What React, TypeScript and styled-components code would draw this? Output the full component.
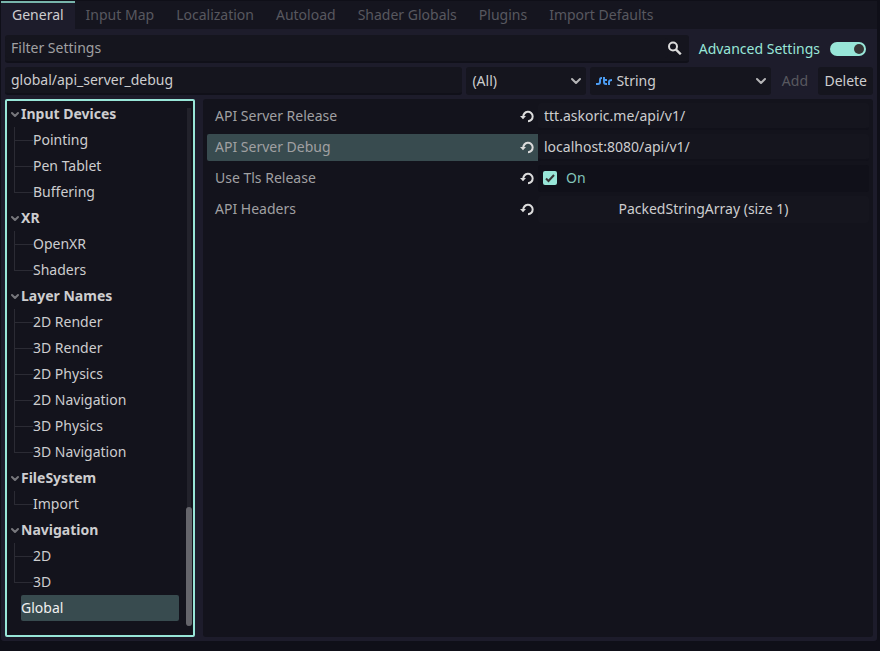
import React, { useState } from "react";
import styled, { createGlobalStyle } from "styled-components";

const c = {
  window: "#0f0f18",
  panel: "#1d1c2b",
  tabs: "#15151f",
  field: "#15151e",
  content: "#13131c",
  accent: "#98e6d8",
  selected: "#384b4f",
  text: "#cdcdcf",
  muted: "#a0a0a2",
  faint: "#58585f",
};

const Global = createGlobalStyle`
  * { box-sizing: border-box; }
  body { margin: 0; background: ${c.window}; }
  body, button, input, select {
    font: 14px/20px "Noto Sans", sans-serif;
    color: ${c.text};
  }
  button, input, select { margin: 0; border: 0; outline: 0; }
`;

const Window = styled.div`
  height: 100vh;
  padding: 1px 3px 10px 1px;
  display: flex;
  flex-direction: column;
`;

const TabBar = styled.div`
  display: flex;
  flex: none;
  height: 28px;
  background: ${c.tabs};
`;

const Tab = styled.button<{ $active: boolean }>`
  flex: none;
  padding: 0 11px 3px;
  white-space: nowrap;
  border-top: 2px solid ${(p) => (p.$active ? "#78b5ac" : "transparent")};
  background: ${(p) => (p.$active ? c.panel : "transparent")};
  color: ${(p) => (p.$active ? c.text : c.faint)};
`;

const Page = styled.main`
  flex: 1;
  min-height: 0;
  display: flex;
  flex-direction: column;
  gap: 4px;
  padding: 6px 4px 4px;
  background: ${c.panel};
  border-radius: 0 0 3px 3px;
`;

const Bar = styled.div`
  display: flex;
  flex: none;
  height: 28px;
  gap: 4px;
`;

const FilterField = styled.label`
  flex: 1;
  display: flex;
  align-items: center;
  padding-right: 7px;
  background: ${c.field};
  border-bottom: 2px solid #101019;
  border-radius: 3px;
`;

const TextInput = styled.input`
  flex: 1;
  min-width: 0;
  padding: 0 6px;
  background: ${c.field};
  border-radius: 3px;
  &::placeholder { color: ${c.muted}; opacity: 1; }
`;

const NameInput = styled(TextInput)`
  border-bottom: 2px solid #101019;
`;

const Toggle = styled.label`
  display: flex;
  align-items: center;
  gap: 10px;
  padding: 0 7px 0 6px;
  color: ${c.accent};
`;

const Switch = styled.input`
  appearance: none;
  display: flex;
  align-items: center;
  width: 36px;
  height: 14px;
  padding: 0 2px;
  border-radius: 7px;
  background: #55565f;
  &::before {
    content: "";
    width: 10px;
    height: 10px;
    border-radius: 50%;
    background: #363636;
  }
  &:checked { background: ${c.accent}; justify-content: flex-end; }
`;

const SelectBox = styled.div<{ $width: number; $icon?: boolean }>`
  display: grid;
  align-items: center;
  flex: 0 0 ${(p) => p.$width}px;
  background: ${c.field};
  border-radius: 3px;
  > * { grid-area: 1 / 1; }
  > svg { pointer-events: none; }
  > select { padding-left: ${(p) => (p.$icon ? 26 : 6)}px; }
`;

const Select = styled.select`
  appearance: none;
  width: 100%;
  height: 28px;
  background: transparent;
  border-radius: 3px;
  option { background: ${c.field}; }
`;

const EndIcon = styled.svg`
  justify-self: end;
  margin-right: 3px;
`;

const StartIcon = styled.svg`
  margin-left: 6px;
`;

const Button = styled.button`
  min-width: 39px;
  padding: 0 6px;
  background: ${c.field};
  border-radius: 3px;
  &:disabled { background: transparent; color: ${c.faint}; }
`;

const Body = styled.div`
  flex: 1;
  min-height: 0;
  display: grid;
  grid-template-columns: 190px minmax(0, 1fr);
  gap: 8px;
`;

const Sidebar = styled.nav`
  display: flex;
  justify-content: space-between;
  padding: 0 1px 0 4px;
  border: 2px solid ${c.accent};
  border-radius: 2px;
  background: ${c.content};
`;

const Tree = styled.ul`
  list-style: none;
  margin: 0;
  padding: 0;
  flex: 0 0 168px;
`;

const Branch = styled.ul`
  list-style: none;
  margin: 0;
  padding: 0 0 0 3px;
`;

const Heading = styled.button`
  display: flex;
  align-items: center;
  gap: 2px;
  width: 100%;
  height: 26px;
  padding: 0;
  background: transparent;
  font-weight: 700;
`;

const Leaf = styled.li`
  display: grid;
  grid-template-columns: 19px 1fr;
  height: 26px;
  &::before {
    content: "";
    height: 13px;
    border: solid #2b2b34;
    border-width: 0 0 1px 1px;
  }
  &:not(:last-child) {
    background: linear-gradient(#2b2b34, #2b2b34) 0 0 / 1px 100% no-repeat;
  }
`;

const LeafButton = styled.button`
  padding: 0;
  text-align: left;
  background: transparent;
`;

const RootItem = styled.li`
  padding-left: 10px;
`;

const SelectedButton = styled(LeafButton)`
  display: block;
  width: 100%;
  height: 26px;
  border-radius: 2px;
  background: ${c.selected};
  color: #f0f0f0;
`;

const Track = styled.div`
  display: flex;
  flex-direction: column;
  justify-content: flex-end;
  align-items: center;
  width: 6px;
  margin: 7px 0 9px;
  background: linear-gradient(#22222b, #22222b) center / 4px 100% no-repeat;
`;

const Thumb = styled.div`
  width: 6px;
  height: 23%;
  border-radius: 3px;
  background: #65656b;
`;

const Inspector = styled.section`
  padding: 4px;
  border-radius: 3px;
  background: ${c.content};
  display: flex;
  flex-direction: column;
  gap: 4px;
`;

const Property = styled.div`
  display: grid;
  grid-template-columns: 1fr 1fr;
  height: 27px;
`;

const Caption = styled.div<{ $selected?: boolean }>`
  display: flex;
  align-items: center;
  justify-content: space-between;
  padding: 0 4px 1px 8px;
  border-radius: 2px 0 0 2px;
  background: ${(p) => (p.$selected ? c.selected : "transparent")};
  color: ${c.muted};
`;

const ResetButton = styled.button`
  display: flex;
  padding: 0;
  background: transparent;
`;

const ValueInput = styled(TextInput)`
  border-bottom: 2px solid #11111a;
`;

const CheckField = styled.label`
  display: flex;
  align-items: center;
  gap: 9px;
  padding: 0 0 1px 5px;
  border-radius: 3px;
  background: #101019;
  color: #83c5ba;
`;

const CheckBox = styled.input`
  appearance: none;
  width: 14px;
  height: 14px;
  border-radius: 2px;
  background: #363640;
  &:checked {
    background: ${c.accent} url("data:image/svg+xml,%3Csvg xmlns='http://www.w3.org/2000/svg' viewBox='0 0 14 14'%3E%3Cpath d='M3 7.5l2.500 2.500 5.500-6' fill='none' stroke='%23363636' stroke-width='2'/%3E%3C/svg%3E");
  }
`;

const ArrayButton = styled.button`
  border-radius: 3px;
  background: ${c.field};
  padding: 0 0 1px;
`;

const Chevron = () => (
  <EndIcon width="14" height="14" viewBox="0 0 14 14" fill="none" stroke="#b5b5b7" strokeWidth="2" strokeLinecap="round" strokeLinejoin="round" aria-hidden>
    <path d="M3 5l4 4 4-4" />
  </EndIcon>
);

const Fold = () => (
  <svg width="8" height="8" viewBox="0 0 8 8" fill="none" stroke="#77777c" strokeWidth="2" strokeLinecap="round" strokeLinejoin="round" aria-hidden>
    <path d="M1 3l3 3 3-3" />
  </svg>
);

const Search = () => (
  <svg width="14" height="14" viewBox="0 0 14 14" fill="none" stroke="#dcdcdc" strokeWidth="2" aria-hidden>
    <circle cx="5" cy="5.5" r="4" />
    <path d="M7.8 8.3l5 5" strokeWidth="2.4" />
  </svg>
);

const Reset = () => (
  <svg width="14" height="14" viewBox="0 0 14 14" aria-hidden>
    <path d="M3.3 8A4.7 4.7 0 1 1 8 12.2" fill="none" stroke="#dcdcdc" strokeWidth="2" />
    <path d="M0 7h6L3 10.300z" fill="#dcdcdc" />
  </svg>
);

const StringIcon = () => (
  <StartIcon width="16" height="14" viewBox="0 0 16 14" fill="none" stroke="#4b9bf0" strokeWidth="2" aria-hidden>
    <path d="M6 4H5.500Q4 4 4 6v2Q4 10 2 10H0" />
    <path d="M8 3v5q0 2 2 2h1M7 6h4M13 11V8q0-2 3-2" />
  </StartIcon>
);

const tabs = ["General", "Input Map", "Localization", "Autoload", "Shader Globals", "Plugins", "Import Defaults"];

const sections = [
  { name: "Input Devices", items: ["Pointing", "Pen Tablet", "Buffering"] },
  { name: "XR", items: ["OpenXR", "Shaders"] },
  { name: "Layer Names", items: ["2D Render", "3D Render", "2D Physics", "2D Navigation", "3D Physics", "3D Navigation"] },
  { name: "FileSystem", items: ["Import"] },
  { name: "Navigation", items: ["2D", "3D"] },
];

function PropertyRow({ label, selected, htmlFor, children }: { label: string; selected?: boolean; htmlFor: string; children: React.ReactNode }) {
  return (
    <Property>
      <Caption $selected={selected}>
        <label htmlFor={htmlFor}>{label}</label>
        <ResetButton aria-label={`Reset ${label}`}><Reset /></ResetButton>
      </Caption>
      {children}
    </Property>
  );
}

export default function App() {
  const [tab, setTab] = useState("General");
  return (
    <Window>
      <Global />
      <TabBar role="tablist">
        {tabs.map((name) => (
          <Tab key={name} role="tab" aria-selected={name === tab} $active={name === tab} onClick={() => setTab(name)}>{name}</Tab>
        ))}
      </TabBar>
      <Page>
        <Bar>
          <FilterField>
            <TextInput placeholder="Filter Settings" aria-label="Filter Settings" />
            <Search />
          </FilterField>
          <Toggle>
            Advanced Settings
            <Switch type="checkbox" role="switch" defaultChecked />
          </Toggle>
        </Bar>
        <Bar>
          <NameInput defaultValue="global/api_server_debug" aria-label="Setting name" />
          <SelectBox $width={120}>
            <Select aria-label="Feature"><option>(All)</option></Select>
            <Chevron />
          </SelectBox>
          <SelectBox $width={181} $icon>
            <Select aria-label="Type"><option>String</option></Select>
            <StringIcon />
            <Chevron />
          </SelectBox>
          <Button disabled>Add</Button>
          <Button>Delete</Button>
        </Bar>
        <Body>
          <Sidebar aria-label="Setting sections">
            <Tree>
              {sections.map((s) => (
                <li key={s.name}>
                  <Heading><Fold />{s.name}</Heading>
                  <Branch>
                    {s.items.map((item) => <Leaf key={item}><LeafButton>{item}</LeafButton></Leaf>)}
                  </Branch>
                </li>
              ))}
              <RootItem><SelectedButton aria-current="true">Global</SelectedButton></RootItem>
            </Tree>
            <Track><Thumb /></Track>
          </Sidebar>
          <Inspector>
            <PropertyRow label="API Server Release" htmlFor="release">
              <ValueInput id="release" defaultValue="ttt.askoric.me/api/v1/" />
            </PropertyRow>
            <PropertyRow label="API Server Debug" htmlFor="debug" selected>
              <ValueInput id="debug" defaultValue="localhost:8080/api/v1/" />
            </PropertyRow>
            <PropertyRow label="Use Tls Release" htmlFor="tls">
              <CheckField><CheckBox id="tls" type="checkbox" defaultChecked />On</CheckField>
            </PropertyRow>
            <PropertyRow label="API Headers" htmlFor="headers">
              <ArrayButton id="headers">PackedStringArray (size 1)</ArrayButton>
            </PropertyRow>
          </Inspector>
        </Body>
      </Page>
    </Window>
  );
}
